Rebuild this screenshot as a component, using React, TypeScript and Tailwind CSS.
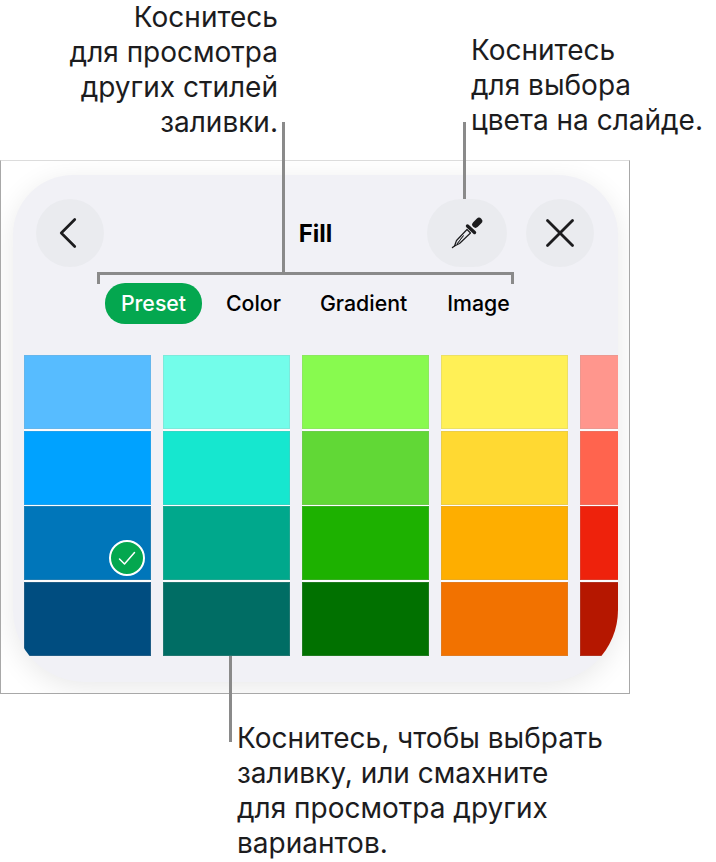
import { X, ChevronLeft } from "lucide-react";

const SWATCHES = [
  ["#57bcff", "#00a2ff", "#0076ba", "#004d80"],
  ["#73fdea", "#16e7cf", "#00a88c", "#006d64"],
  ["#88fa4f", "#61d836", "#1db100", "#017100"],
  ["#fff056", "#ffd932", "#feae00", "#f27200"],
  ["#ff968d", "#ff644e", "#ee220c", "#b51700"],
];

function Eyedropper() {
  return (
    <svg width="32" height="32" viewBox="0 0 32 32" fill="none" className="text-[#1c1c1e]">
      <path d="M24.5 7.5 L28 4" stroke="currentColor" strokeWidth="6.5" strokeLinecap="round" />
      <path d="M16.5 9 L23.5 15.5" stroke="currentColor" strokeWidth="3.4" strokeLinecap="round" />
      <path d="M16 12.5 L19.5 16 L8.5 26.5 L3.5 29 L5.5 23.5 Z" stroke="currentColor" strokeWidth="1.2" strokeLinejoin="round" />
      <path d="M12.5 18.5 L6 27 L11 20.5 Z" fill="currentColor" stroke="currentColor" strokeWidth="0.8" />
      <path d="M3.5 29 L1.5 30.5" stroke="currentColor" strokeWidth="1.4" strokeLinecap="round" />
    </svg>
  );
}

export default function App() {
  return (
    <div className="relative w-[716px] h-[862px] bg-white font-['Inter',sans-serif] text-[28px] leading-[35px] text-[#1c1c1e]">
      {/* top callouts */}
      <div className="flex h-[160px]">
        <p className="w-[278px] shrink-0 text-right">
          Коснитесь
          <br />
          для просмотра
          <br />
          других стилей
          <br />
          заливки.
        </p>
        <p className="ml-[193px] pt-[33px] whitespace-nowrap">
          Коснитесь
          <br />
          для выбора
          <br />
          цвета на слайде.
        </p>
      </div>

      {/* frame around the panel */}
      <div className="w-[630px] h-[534px] overflow-hidden border border-t-[#dcdcdc] border-x-[#a8a8a8] border-b-[#a8a8a8] bg-white pt-[14px] pl-[12px]">
        <div className="w-[605px] h-[507px] bg-[#f1f1f6] rounded-t-[60px] rounded-b-[72px] overflow-hidden shadow-[0_6px_28px_rgba(0,0,0,0.09)]">
          <div className="flex items-center h-[68px] mt-[24px] ml-[23px]">
            <button className="w-[68px] h-[68px] rounded-full bg-[#eaebef] flex items-center justify-center">
              <ChevronLeft size={54} strokeWidth={1.2} className="text-[#1c1c1e] -ml-[4px]" />
            </button>
            <div className="w-[323px] pl-[100px] text-center text-[24px] font-bold text-black">Fill</div>
            <button className="w-[80px] h-[68px] rounded-full bg-[#eaebef] flex items-center justify-center">
              <Eyedropper />
            </button>
            <button className="ml-[19px] w-[68px] h-[68px] rounded-full bg-[#eaebef] flex items-center justify-center">
              <X size={50} strokeWidth={1.35} className="text-[#1c1c1e]" />
            </button>
          </div>

          <div className="flex items-center h-[41px] mt-[16px] ml-[92px] text-[21.3px] font-medium text-black leading-none">
            <div className="w-[97px] h-[41px] rounded-[20px] bg-[#04a74f] text-white flex items-center justify-center">Preset</div>
            <span className="ml-[24px]">Color</span>
            <span className="ml-[39px]">Gradient</span>
            <span className="ml-[40px]">Image</span>
          </div>

          <div className="flex gap-[12.5px] mt-[31px] ml-[11px]">
            {SWATCHES.map((col, i) => (
              <div key={i} className="flex flex-col gap-[1.5px] shrink-0 w-[126.5px] bg-white/80">
                {col.map((color, j) => (
                  <div
                    key={color}
                    className="relative h-[74.13px] border border-[#a0a0a0]/20"
                    style={{ backgroundColor: color }}
                  >
                    {i === 0 && j === 2 && (
                      <div className="absolute left-[84px] top-[33px] w-[36px] h-[36px] rounded-full border-2 border-white bg-[#04a74f] flex items-center justify-center">
                        <svg width="24" height="24" viewBox="0 0 24 24" fill="none">
                          <path d="M4.5 13 L9.5 18 L19.5 6.5" stroke="white" strokeWidth="1.5" strokeLinecap="round" strokeLinejoin="round" />
                        </svg>
                      </div>
                    )}
                  </div>
                ))}
              </div>
            ))}
          </div>
        </div>
      </div>

      {/* bottom callout */}
      <p className="ml-[237px] mt-[27px] whitespace-nowrap">
        Коснитесь, чтобы выбрать
        <br />
        заливку, или смахните
        <br />
        для просмотра других
        <br />
        вариантов.
      </p>

      {/* leader lines */}
      <div className="absolute left-[282px] top-[122px] w-[3px] h-[152px] bg-[#8a8a8a]" />
      <div className="absolute left-[97px] top-[272px] w-[417px] h-[12px] border-t-[3px] border-x-[3px] border-[#8a8a8a]" />
      <div className="absolute left-[463px] top-[122px] w-[3px] h-[77px] bg-[#8a8a8a]" />
      <div className="absolute left-[229px] top-[656px] w-[3px] h-[86px] bg-[#8a8a8a]" />
    </div>
  );
}
